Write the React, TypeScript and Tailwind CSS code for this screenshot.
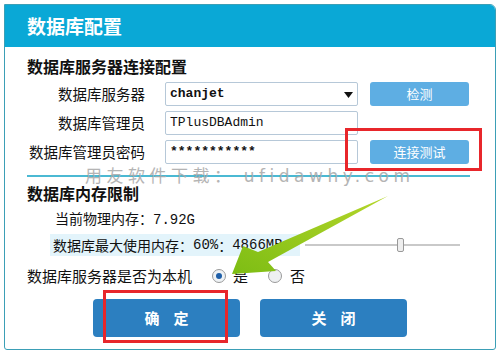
import React from "react";

const cjk = { fontFamily: '"Noto Sans CJK SC", "Noto Sans", sans-serif' };
const mono = { fontFamily: '"Liberation Mono", "DejaVu Sans Mono", monospace' };

function Row({ label, children, button }: { label: string; children: React.ReactNode; button?: React.ReactNode }) {
  return (
    <div className="flex items-center h-[24px]">
      <div className="w-[118px] text-right text-[14.5px] leading-[20px] text-[#111] whitespace-nowrap">{label}</div>
      <div className="ml-[20px] w-[193px] h-[24px] bg-white border border-[#b6c8d8] rounded-[2px] flex items-center pl-[4px] relative">
        {children}
      </div>
      <div className="ml-[12px] w-[99px] h-[24px]">{button}</div>
    </div>
  );
}

function LightBtn({ text }: { text: string }) {
  return (
    <div className="w-[99px] h-[24px] rounded-[3px] bg-[#5eaee3] text-white text-[13px] flex items-center justify-center">
      {text}
    </div>
  );
}

export default function App() {
  return (
    <div className="w-[500px] h-[353px] bg-white relative overflow-hidden" style={cjk}>
      <div className="absolute left-[4px] top-[4px] w-[492px] h-[346px] border border-[#3b9fb6] rounded-tr-[6px] rounded-b-[3px] overflow-hidden flex flex-col">
        <div className="h-[42px] bg-[#0aa8d6] flex items-center pl-[22px] text-white text-[19px] font-bold">
          数据库配置
        </div>
        <div className="pl-[22px] flex flex-col">
          <div className="mt-[9px] text-[16px] font-bold leading-[20px] text-[#111]">数据库服务器连接配置</div>
          <div className="mt-[6px] flex flex-col gap-[5px]">
            <Row label="数据库服务器" button={<LightBtn text="检测" />}>
              <span className="text-[13px] font-bold text-[#111]" style={mono}>chanjet</span>
              <svg className="absolute right-[4px] top-[9px]" width="9" height="6" viewBox="0 0 9 6">
                <polygon points="0,0 9,0 4.5,6" fill="#111" />
              </svg>
            </Row>
            <Row label="数据库管理员">
              <span className="text-[13px] text-[#111]" style={mono}>TPlusDBAdmin</span>
            </Row>
            <Row label="数据库管理员密码" button={<LightBtn text="连接测试" />}>
              <span className="text-[13px] font-bold text-[#111]" style={mono}>***********</span>
            </Row>
          </div>
          <div className="mt-[11px] w-[443px] h-[2px] bg-[#4bb9d3]" />
          <div className="mt-[6px] text-[16px] font-bold leading-[20px] text-[#111]">数据库内存限制</div>
          <div className="mt-[5px] ml-[28px] text-[14px] leading-[20px] text-[#111]">
            当前物理内存：<span style={mono}>7.92G</span>
          </div>
          <div className="mt-[4px] flex items-center h-[22px]">
            <div className="ml-[23px] w-[250px] h-[22px] bg-[#e3f4fb] flex items-center pl-[3px] text-[14px] text-[#111] whitespace-nowrap overflow-hidden">
              数据库最大使用内存：<span style={mono}>60%</span>：<span style={mono}>4866MB</span>
            </div>
            <div className="ml-[5px] w-[155px] h-[14px] relative flex items-center">
              <div className="w-full h-[2px] bg-[#c9c9c9]" />
              <div className="absolute left-[92px] top-0 w-[7px] h-[14px] rounded-[2px] border border-[#999] bg-[#eee]" />
            </div>
          </div>
          <div className="mt-[10px] flex items-center h-[20px] text-[15px] text-[#111]">
            <span>数据库服务器是否为本机</span>
            <span className="ml-[20px] w-[14px] h-[14px] rounded-full border border-[#9a9a9a] bg-[#eef2f5] flex items-center justify-center">
              <span className="w-[6px] h-[6px] rounded-full bg-[#1f5fa8]" />
            </span>
            <span className="ml-[7px]">是</span>
            <span className="ml-[20px] w-[14px] h-[14px] rounded-full border border-[#9a9a9a] bg-[#eef0f2]" />
            <span className="ml-[8px]">否</span>
          </div>
          <div className="mt-[13px] flex gap-[20px] pl-[66px]">
            <div className="w-[147px] h-[38px] rounded-[4px] bg-[#2c7fc0] text-white text-[15px] font-bold flex items-center justify-center tracking-[14px] pl-[14px]">
              确定
            </div>
            <div className="w-[147px] h-[38px] rounded-[4px] bg-[#2c7fc0] text-white text-[15px] font-bold flex items-center justify-center tracking-[14px] pl-[14px]">
              关闭
            </div>
          </div>
        </div>
      </div>

      {/* watermark */}
      <div className="absolute left-[85px] top-[167px] text-[17px] leading-[15px] text-[#a8a8a8] whitespace-nowrap tracking-[4.5px]" style={{ ...cjk, opacity: 0.85 }}>
        用友软件下载： <span style={{ fontFamily: '"DejaVu Sans", sans-serif' }}>ufidawhy.com</span>
      </div>

      {/* red highlight boxes */}
      <div className="absolute left-[345px] top-[128px] w-[137px] h-[43px] border-[3px] border-[#e8262b]" />
      <div className="absolute left-[103px] top-[290px] w-[125px] h-[53px] border-[3px] border-[#e8262b]" />

      {/* green arrow */}
      <svg className="absolute left-0 top-0" width="500" height="353" viewBox="0 0 500 353">
        <defs>
          <linearGradient id="ga" x1="1" y1="0" x2="0" y2="1">
            <stop offset="0" stopColor="#b5d62a" />
            <stop offset="1" stopColor="#7dbd14" />
          </linearGradient>
        </defs>
        <polygon points="232,274 243,246 258,252 388,196 268,262 276,271" fill="url(#ga)" />
      </svg>
    </div>
  );
}
